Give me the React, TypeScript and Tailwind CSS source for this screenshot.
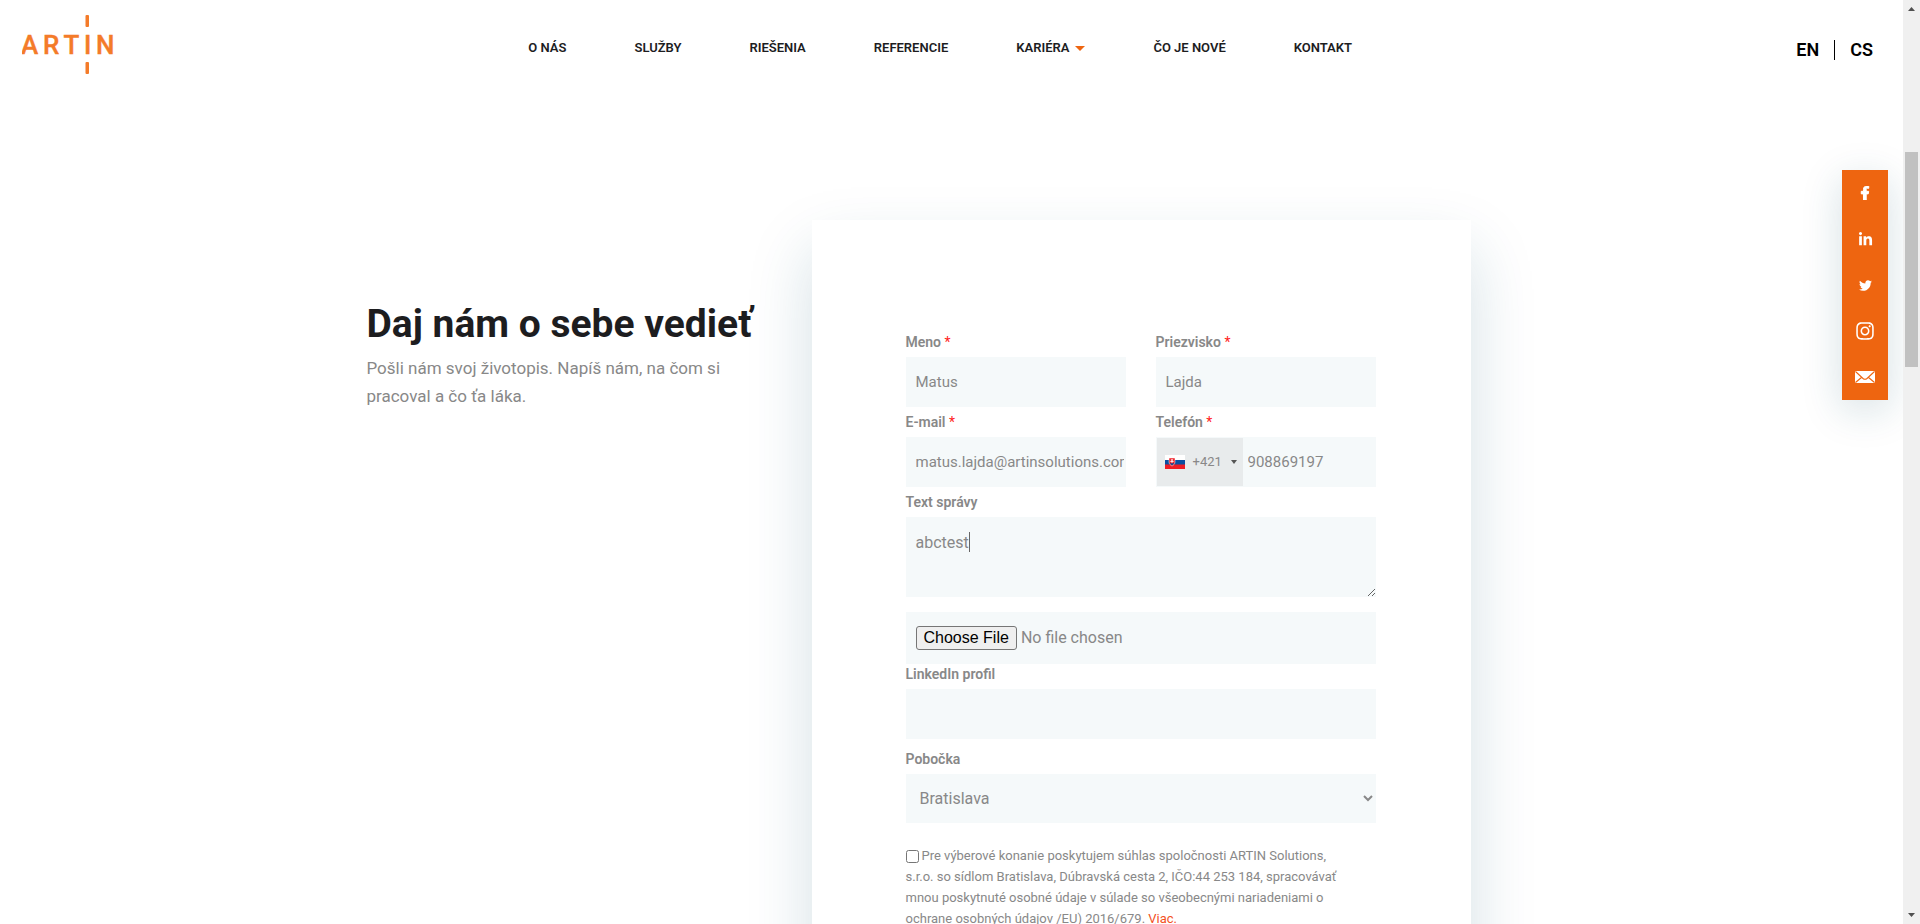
import type { ReactNode } from "react";
import { FaFacebookF, FaLinkedinIn, FaTwitter, FaInstagram } from "react-icons/fa";

const field = "block w-full bg-[#f5f9fa] text-[#888] outline-none";

const navItems = [
  { label: "O NÁS" },
  { label: "SLUŽBY" },
  { label: "RIEŠENIA" },
  { label: "REFERENCIE" },
  { label: "KARIÉRA", menu: true },
  { label: "ČO JE NOVÉ" },
  { label: "KONTAKT" },
];

function Logo() {
  return (
    <a href="#" aria-label="ARTIN" className="block">
      <svg width="100" height="60" viewBox="0 0 100 60" fill="#f47b29">
        <rect x="63.500" y="0" width="3.500" height="12" rx="1" />
        <rect x="63.500" y="47" width="3.500" height="12" rx="1" />
        <text x="-1 21 41.500 62 74" y="39" fontSize="26" fontWeight="500" fontFamily="Roboto, sans-serif" stroke="#f47b29" strokeWidth="0.4">
          ARTIN
        </text>
      </svg>
    </a>
  );
}

function Header() {
  return (
    <header className="flex h-24 items-start justify-between pl-[22px] pr-[30px] pt-[15px]">
      <Logo />
      <nav className="mr-[38px] flex gap-[68px] pt-[25px] text-[13px] leading-4 font-semibold text-[#1d1d1f]">
        {navItems.map((item) => (
          <a key={item.label} href="#" className="flex items-center gap-1.5 whitespace-nowrap">
            {item.label}
            {item.menu && (
              <svg width="10" height="5" viewBox="0 0 10 5" fill="#ee6510">
                <path d="M0 0h10L5 5z" />
              </svg>
            )}
          </a>
        ))}
      </nav>
      <div className="flex items-center pt-[25px] text-lg leading-5 font-semibold text-black">
        <a href="#" className="border-r border-black pr-[15px]">EN</a>
        <a href="#" className="pl-[15px]">CS</a>
      </div>
    </header>
  );
}

function MailIcon() {
  return (
    <svg width="20" height="12" viewBox="0 0 20 12">
      <rect width="20" height="12" rx="1" fill="#fff" />
      <path d="M0.5 0.5 8 7.500q2 1.500 4 0L19.5 0.5M0.5 11.5 7 6M19.5 11.5 13 6" fill="none" stroke="#ee6510" strokeWidth="1.1" />
    </svg>
  );
}

function SocialBar() {
  const links = [
    { name: "Facebook", icon: <FaFacebookF size={14} stroke="white" strokeWidth={36} /> },
    { name: "LinkedIn", icon: <FaLinkedinIn size={15} /> },
    { name: "Twitter", icon: <FaTwitter size={13} /> },
    { name: "Instagram", icon: <FaInstagram size={20} /> },
    { name: "E-mail", icon: <MailIcon /> },
  ];
  return (
    <aside className="absolute top-[170px] right-[15px] flex w-[46px] flex-col bg-[#ee6510] text-white shadow-[0_10px_40px_rgba(15,75,100,0.18)]">
      {links.map((l) => (
        <a key={l.name} href="#" aria-label={l.name} className="flex h-[46px] items-center justify-center">
          {l.icon}
        </a>
      ))}
    </aside>
  );
}

function Label({ id, required, children }: { id: string; required?: boolean; children: ReactNode }) {
  return (
    <label htmlFor={id} className="block h-[30px] text-sm leading-[30px] font-semibold text-[#888]">
      {children}
      {required && <span className="font-normal text-[#f22]"> *</span>}
    </label>
  );
}

function SlovakFlag() {
  return (
    <svg width="20" height="14" viewBox="0 0 20 14">
      <rect width="20" height="14" fill="#fff" />
      <rect y="5" width="20" height="5" fill="#0b4ea2" />
      <rect y="9.5" width="20" height="4.5" fill="#ee1c25" />
      <path d="M4 3h6v4c0 2-1.5 3.200-3 4-1.500-.8-3-2-3-4z" fill="#ee1c25" stroke="#fff" strokeWidth=".5" />
      <path d="M7 4v4M5.800 5h2.400M5.300 6.500h3.400" stroke="#fff" strokeWidth=".8" />
      <path d="M5 8.500q1-1 2 0 1-1 2 0L7 10.500z" fill="#0b4ea2" />
    </svg>
  );
}

function CareerForm() {
  return (
    <form className="w-[659px] shrink-0 bg-white pt-[107px] pr-[95px] pb-24 pl-[94px] shadow-[0_30px_60px_rgba(15,85,110,0.18)]">
      <div className="grid grid-cols-2 gap-x-[30px]">
        <div>
          <Label id="first" required>Meno</Label>
          <input id="first" defaultValue="Matus" className={`${field} h-[50px] px-2.5 text-[15px]`} />
        </div>
        <div>
          <Label id="last" required>Priezvisko</Label>
          <input id="last" defaultValue="Lajda" className={`${field} h-[50px] px-2.5 text-[15px]`} />
        </div>
        <div>
          <Label id="email" required>E-mail</Label>
          <input id="email" defaultValue="matus.lajda@artinsolutions.com" className={`${field} h-[50px] pr-0.5 pl-2.5 text-[15px]`} />
        </div>
        <div>
          <Label id="phone" required>Telefón</Label>
          <div className="flex h-[50px] bg-[#f5f9fa] p-px">
            <button type="button" aria-label="Predvoľba" className="flex w-[86px] shrink-0 items-center bg-[#e8ebec] pl-2 text-[13px] text-[#888]">
              <SlovakFlag />
              <span className="flex-1 pl-2 text-left">+421</span>
              <svg width="6" height="4" viewBox="0 0 6 4" className="mr-1.5" fill="#555">
                <path d="M0 0h6L3 4z" />
              </svg>
            </button>
            <input id="phone" defaultValue="908869197" className="w-full min-w-0 bg-transparent pl-[5px] text-[15px] text-[#888] outline-none" />
          </div>
        </div>
      </div>

      <Label id="message">Text správy</Label>
      <div className="relative">
        <textarea id="message" defaultValue="abctest" className={`${field} h-20 resize-y px-2.5 py-[14px] text-base leading-6`} />
        <div aria-hidden="true" className="pointer-events-none absolute top-[15px] left-2.5 flex h-5 text-base">
          <span className="invisible">abctest</span>
          <span className="h-5 w-px bg-[#666]" />
        </div>
      </div>

      <input
        type="file"
        aria-label="Životopis"
        className={`${field} mt-[15px] h-[52px] px-2.5 py-[14px] text-base leading-6 file:mr-1 file:h-6 file:rounded-[3px] file:border file:border-solid file:border-[#767676] file:bg-[#efefef] file:px-[7px] file:py-0 file:font-['Liberation_Sans'] file:text-base file:leading-5 file:text-black`}
      />

      <div className="-mt-[5px]">
        <Label id="linkedin">LinkedIn profil</Label>
      </div>
      <input id="linkedin" className={`${field} h-[50px] px-2.5 text-base`} />

      <div className="pt-[5px]">
        <Label id="branch">Pobočka</Label>
      </div>
      <select id="branch" className={`${field} h-[49px] pl-2.5 text-base`}>
        <option>Bratislava</option>
      </select>

      <div className="pt-[22px] text-[13px] leading-[21px] text-[#888]">
        <input id="consent" type="checkbox" className="mr-[3px] size-[13px] align-[-3px]" />
        <label htmlFor="consent">
          Pre výberové konanie poskytujem súhlas spoločnosti ARTIN Solutions,
          <br />
          s.r.o. so sídlom Bratislava, Dúbravská cesta 2, IČO:44 253 184, spracovávať
          <br />
          mnou poskytnuté osobné údaje v súlade so všeobecnými nariadeniami o
          <br />
          ochrane osobných údajov /EU) 2016/679.{" "}
        </label>
        <a href="#" className="text-[#f4511e]">Viac.</a>
      </div>
    </form>
  );
}

function ScrollTrack() {
  return (
    <div aria-hidden="true" className="flex w-[17px] shrink-0 flex-col items-center justify-between bg-[#f0f0f0] py-[7px]">
      <svg width="7" height="4" viewBox="0 0 7 4" fill="#505050"><path d="M0 4h7L3.500 0z" /></svg>
      <div className="mt-[141px] mb-auto h-[215px] w-[13px] bg-[#c1c1c1]" />
      <svg width="7" height="4" viewBox="0 0 7 4" fill="#505050"><path d="M0 0h7L3.500 4z" /></svg>
    </div>
  );
}

export default function App() {
  return (
    <div className="flex h-screen overflow-hidden bg-white font-[Roboto,sans-serif]">
      <div className="relative min-w-0 flex-1 overflow-hidden">
        <Header />
        <main className="mx-auto flex max-w-[1170px] items-start justify-between pt-[124px] pr-[66px]">
          <section className="pt-[79px]">
            <h1 className="text-[39px] leading-[50px] font-bold whitespace-nowrap text-[#1d1d1f]">Daj nám o sebe vedieť</h1>
            <p className="pt-[5px] text-[17px] leading-7 text-[#888]">
              Pošli nám svoj životopis. Napíš nám, na čom si
              <br />
              pracoval a čo ťa láka.
            </p>
          </section>
          <CareerForm />
        </main>
        <SocialBar />
      </div>
      <ScrollTrack />
    </div>
  );
}
